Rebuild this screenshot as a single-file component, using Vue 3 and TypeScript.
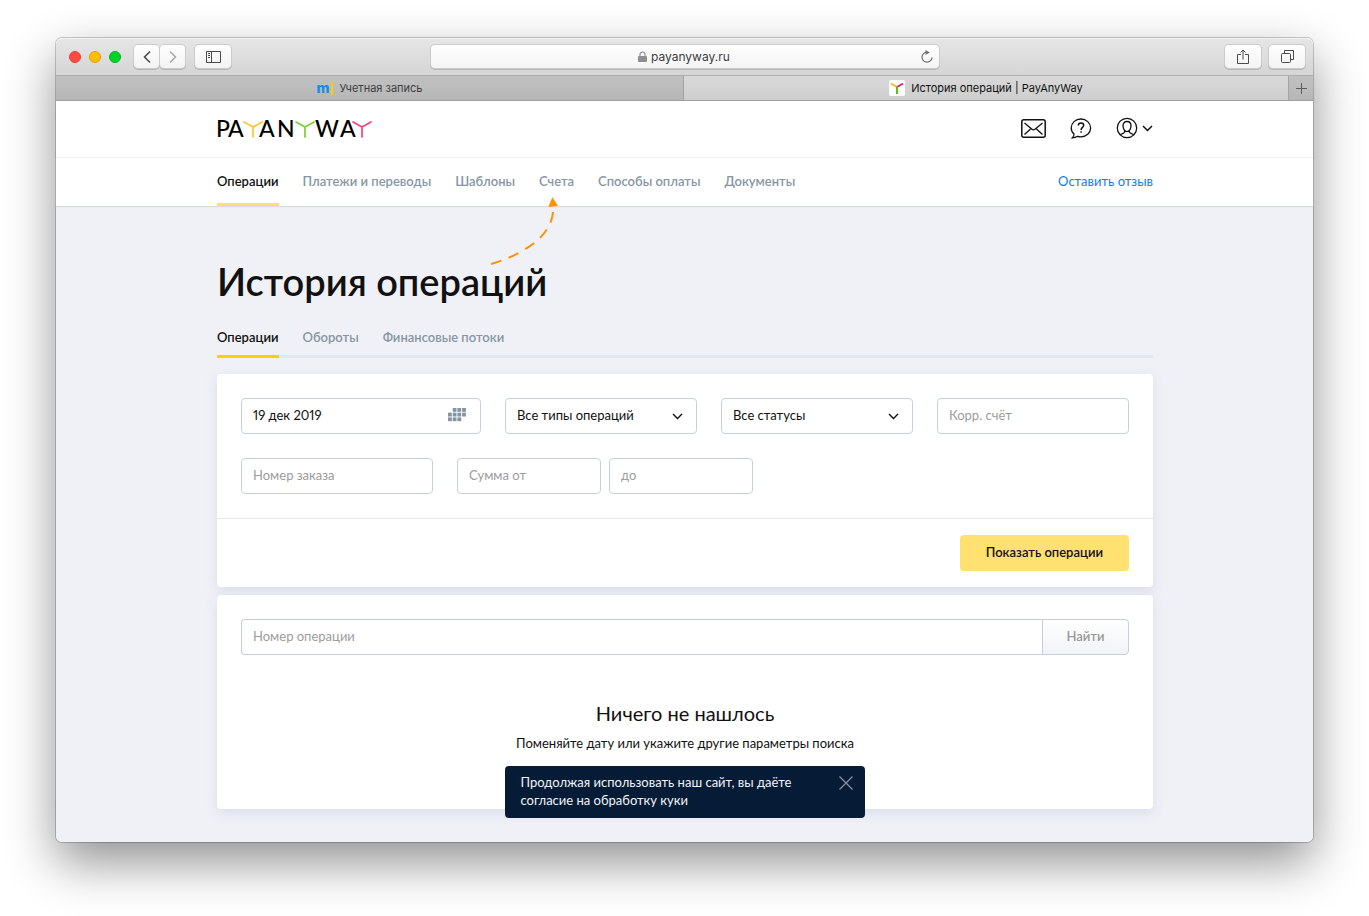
<script setup lang="ts">
import { ref } from 'vue'

interface LinkItem {
  label: string
  active?: boolean
}

const sections: LinkItem[] = [
  { label: 'Операции', active: true },
  { label: 'Платежи и переводы' },
  { label: 'Шаблоны' },
  { label: 'Счета' },
  { label: 'Способы оплаты' },
  { label: 'Документы' },
]

const tabs: LinkItem[] = [
  { label: 'Операции', active: true },
  { label: 'Обороты' },
  { label: 'Финансовые потоки' },
]

const calendarCells: [number, number][] = [
  [4.7, 0], [9.4, 0], [14.1, 0],
  [0, 4.7], [4.7, 4.7], [9.4, 4.7], [14.1, 4.7],
  [0, 9.4], [4.7, 9.4], [9.4, 9.4],
]

const address = ref('payanyway.ru')
const date = ref('19 дек 2019')
const operationType = ref('all')
const status = ref('all')
const account = ref('')
const order = ref('')
const amountFrom = ref('')
const amountTo = ref('')
const operationId = ref('')
const cookieNotice = ref(true)
</script>

<template>
  <div class="desktop">
    <div class="window">
      <div class="toolbar">
        <div class="toolbar-left">
          <div class="lights">
            <span class="light red"></span>
            <span class="light amber"></span>
            <span class="light green"></span>
          </div>
          <div class="history">
            <button class="chrome-button" type="button" aria-label="Назад">
              <svg width="10" height="14" viewBox="0 0 10 14"><path d="M8 1.500L2.500 7L8 12.500" fill="none" stroke="#4a4a4a" stroke-width="1.600" /></svg>
            </button>
            <button class="chrome-button" type="button" aria-label="Вперёд">
              <svg width="10" height="14" viewBox="0 0 10 14"><path d="M2 1.500L7.500 7L2 12.500" fill="none" stroke="#a9a9a9" stroke-width="1.600" /></svg>
            </button>
          </div>
          <button class="chrome-button wide" type="button" aria-label="Боковая панель">
            <svg width="15" height="12" viewBox="0 0 15 12" fill="none" stroke="#4a4a4a"><path d="M.5.5h14v11H.5zM5.500.5v11M2 2.500h2M2 4.500h2M2 6.500h2" /></svg>
          </button>
        </div>
        <label class="address">
          <svg width="9" height="12" viewBox="0 0 9 12"><path d="M2 6V3.500a2.500 2.500 0 0 1 5 0V6" fill="none" stroke="#8e8e8e" stroke-width="1.200" /><rect x="0" y="5" width="9" height="6" rx="1" fill="#8e8e8e" /></svg>
          <input v-model="address" class="address-input" type="text" aria-label="Адрес" />
          <button class="reload" type="button" aria-label="Обновить">
            <svg width="14" height="14" viewBox="0 0 14 14"><path d="M7 2.200A5 5 0 1 0 12 7.500" fill="none" stroke="#6f6f6f" stroke-width="1.200" /><path d="M5.500 0L9.800 2.400L5.500 5z" fill="#6f6f6f" /></svg>
          </button>
        </label>
        <div class="toolbar-right">
          <button class="chrome-button wide" type="button" aria-label="Поделиться">
            <svg width="12" height="16" viewBox="0 0 12 16" fill="none" stroke="#4a4a4a"><path d="M4 5.500H.5v9h11v-9H8M6 10.500V1M3.500 3.500L6 1l2.500 2.500" /></svg>
          </button>
          <button class="chrome-button wide" type="button" aria-label="Вкладки">
            <svg width="13" height="13" viewBox="0 0 13 13" fill="none" stroke="#4a4a4a"><rect x=".5" y="3.500" width="9" height="9" rx="1" /><path d="M3.500 3V.5h9v9H10" /></svg>
          </button>
        </div>
      </div>

      <div class="browser-tabs">
        <a class="browser-tab account-tab" href="#">
          <span class="m-mark">m</span><span class="m-bar"></span>Учетная запись
        </a>
        <a class="browser-tab current" href="#">
          <svg class="favicon" width="16" height="16" viewBox="0 0 16 16" fill="none" stroke-width="2"><rect width="16" height="16" rx="2" fill="#fff" /><path d="M2 3.500L8 7" stroke="#fdb813" /><path d="M8 7L14 3.500" stroke="#ee1c78" /><path d="M8 6.500V14" stroke="#58c30c" /></svg>
          История операций | PayAnyWay
        </a>
        <button class="new-tab" type="button" aria-label="Новая вкладка">
          <svg width="11" height="11" viewBox="0 0 11 11"><path d="M5.500 0v11M0 5.500h11" stroke="#5c5c5c" /></svg>
        </button>
      </div>

      <div class="page">
        <header class="header">
          <a class="logo" href="#" aria-label="PayAnyWay">
            <svg width="160" height="36" viewBox="-4 -8 160 36">
              <g class="logo-text">
                <text x="-1" y="18">P</text>
                <text x="11" y="18">A</text>
                <text x="42" y="18">A</text>
                <text x="60" y="18">N</text>
                <text x="98" y="18">W</text>
                <text x="123" y="18">A</text>
              </g>
              <g fill="none" stroke-width="1.700" stroke-linecap="round">
                <path d="M27 3l9 5 9-5M36 8v10" stroke="#ffc62b" />
                <path d="M79 3l9 5 9-5M88 8v10" stroke="#79cf30" />
                <path d="M136 3l9 5 9-5M145 8v10" stroke="#f4437f" />
              </g>
            </svg>
          </a>
          <div class="header-actions">
            <button class="icon-button" type="button" aria-label="Сообщения">
              <svg width="25" height="19" viewBox="0 0 25 19" fill="none" stroke="#111" stroke-width="1.500"><rect x=".8" y=".8" width="23.400" height="17.400" rx="2" /><path d="M3.500 4l7.500 6.200q1.500 1.200 3 0L21.500 4M3.500 15.500l6-5.500M21.500 15.500l-6-5.500" stroke-width="1.300" /></svg>
            </button>
            <button class="icon-button" type="button" aria-label="Помощь">
              <svg width="22" height="21" viewBox="0 0 22 21" fill="none" stroke="#111" stroke-width="1.300"><path d="M4 16C2.200 14.500 1.200 12.400 1.200 10c0-5 4.300-9 9.700-9s9.700 4 9.700 9-4.300 8.800-9.700 8.800c-1.300 0-2.400-.2-3.500-.5-1.300.9-3 1.500-5 1.500C3.600 18.800 4 17.500 4 16z" /><path d="M8.300 7.500c0-1.600 1.100-2.600 2.700-2.600s2.700.9 2.700 2.400c0 2.100-2.600 2-2.600 4.600M11.100 13.200v1.500" stroke-width="1.500" /></svg>
            </button>
            <button class="icon-button profile" type="button" aria-label="Профиль">
              <svg width="22" height="22" viewBox="0 0 22 22" fill="none" stroke="#111" stroke-width="1.300"><circle cx="11" cy="11" r="9.700" /><path d="M11 4.500c-2.600 0-4 1.800-4 4.300 0 3 1.700 5.800 4 5.800s4-2.800 4-5.800c0-2.500-1.400-4.300-4-4.300zM8.700 13.800v1.300c0 1.300-3.400 1.400-4.600 2.800M13.300 13.800v1.300c0 1.300 3.400 1.400 4.600 2.800" /></svg>
              <svg width="11" height="7" viewBox="0 0 11 7"><path d="M1 1l4.500 4.500L10 1" fill="none" stroke="#111" stroke-width="1.500" /></svg>
            </button>
          </div>
        </header>

        <nav class="nav">
          <a v-for="item in sections" :key="item.label" class="nav-link" :class="{ active: item.active }" href="#">{{ item.label }}</a>
          <a class="feedback" href="#">Оставить отзыв</a>
        </nav>

        <svg class="pointer" width="72" height="70" viewBox="0 0 72 70">
          <path d="M3 67C30 59 63 42 65 15" pathLength="79" fill="none" stroke="#ff9100" stroke-width="2" stroke-dasharray="10 7.250" />
          <path d="M64.300.3L60.300 10L70 8.800z" fill="#ff9100" />
        </svg>

        <main class="content">
          <h1 class="title">История операций</h1>
          <nav class="tabs">
            <a v-for="item in tabs" :key="item.label" class="tab" :class="{ active: item.active }" href="#">{{ item.label }}</a>
          </nav>

          <form class="card" @submit.prevent>
            <div class="filters">
              <div class="field">
                <input v-model="date" class="control" type="text" aria-label="Дата" />
                <svg class="field-icon calendar" width="19" height="14" viewBox="0 0 19 14" fill="#8494a2">
                  <rect v-for="[x, y] in calendarCells" :key="`${x}-${y}`" :x="x" :y="y" width="3.800" height="3.800" />
                </svg>
              </div>
              <div class="field">
                <select v-model="operationType" class="control" aria-label="Тип операции">
                  <option value="all">Все типы операций</option>
                </select>
                <svg class="field-icon" width="11" height="7" viewBox="0 0 11 7"><path d="M1 1l4.500 4.500L10 1" fill="none" stroke="#111" stroke-width="1.400" /></svg>
              </div>
              <div class="field">
                <select v-model="status" class="control" aria-label="Статус">
                  <option value="all">Все статусы</option>
                </select>
                <svg class="field-icon" width="11" height="7" viewBox="0 0 11 7"><path d="M1 1l4.500 4.500L10 1" fill="none" stroke="#111" stroke-width="1.400" /></svg>
              </div>
              <input v-model="account" class="control" type="text" placeholder="Корр. счёт" aria-label="Корр. счёт" />
            </div>
            <div class="filters-extra">
              <input v-model="order" class="control order" type="text" placeholder="Номер заказа" aria-label="Номер заказа" />
              <div class="range">
                <input v-model="amountFrom" class="control" type="text" placeholder="Сумма от" aria-label="Сумма от" />
                <input v-model="amountTo" class="control" type="text" placeholder="до" aria-label="Сумма до" />
              </div>
            </div>
            <div class="card-footer">
              <button class="submit" type="submit">Показать операции</button>
            </div>
          </form>

          <section class="card results">
            <form class="search" @submit.prevent>
              <input v-model="operationId" class="control search-input" type="text" placeholder="Номер операции" aria-label="Номер операции" />
              <button class="search-button" type="submit">Найти</button>
            </form>
            <h2 class="empty-title">Ничего не нашлось</h2>
            <p class="empty-text">Поменяйте дату или укажите другие параметры поиска</p>
          </section>
        </main>
      </div>

      <div v-if="cookieNotice" class="cookie">
        <p class="cookie-text">Продолжая использовать наш сайт, вы даёте согласие на обработку куки</p>
        <button class="cookie-close" type="button" aria-label="Закрыть" @click="cookieNotice = false">
          <svg width="14" height="14" viewBox="0 0 14 14"><path d="M.5.5l13 13M13.500.5l-13 13" stroke="#8290a0" stroke-width="1.300" /></svg>
        </button>
      </div>
    </div>
  </div>
</template>

<style>
body {
  margin: 0;
  background: #fff;
}
</style>

<style scoped>
* {
  box-sizing: border-box;
}

.desktop {
  display: flex;
  min-height: 100vh;
  padding: 38px 56px 74px;
  overflow: hidden;
  font-family: Lato, "Open Sans", "Liberation Sans", sans-serif;
  font-size: 13px;
  font-variant-numeric: proportional-nums;
  line-height: 18px;
  color: #111;
}

button,
input,
select {
  margin: 0;
  font: inherit;
  color: inherit;
}

button {
  padding: 0;
  border: 0;
  background: none;
  cursor: pointer;
}

a {
  color: inherit;
  text-decoration: none;
}

svg {
  display: block;
  flex: none;
}

.window {
  position: relative;
  display: flex;
  flex: 1;
  flex-direction: column;
  border-radius: 6px;
  box-shadow: 0 0 0 1px rgba(0, 0, 0, 0.2), 0 20px 50px rgba(0, 0, 0, 0.44);
}

.toolbar {
  display: grid;
  grid-template-columns: 1fr 508px 1fr;
  align-items: center;
  height: 38px;
  padding: 0 8px;
  border-bottom: 1px solid #adadad;
  border-radius: 6px 6px 0 0;
  background: linear-gradient(#e6e6e6, #d5d5d5);
  box-shadow: inset 0 1px #f4f4f4;
  font-family: Inter, "Liberation Sans", sans-serif;
}

.toolbar-left,
.toolbar-right,
.lights,
.history {
  display: flex;
  align-items: center;
}

.toolbar-left {
  padding-left: 5px;
}

.toolbar-right {
  justify-content: flex-end;
  gap: 8px;
}

.lights {
  gap: 8px;
}

.light {
  width: 12px;
  height: 12px;
  border: 1px solid;
  border-radius: 50%;
}

.red {
  border-color: #e33e38;
  background: #ff4a42;
}

.amber {
  border-color: #e0a100;
  background: #ffbd00;
}

.green {
  border-color: #00b51e;
  background: #00d226;
}

.history {
  gap: 1px;
  margin: 0 10px 0 13px;
}

.chrome-button {
  display: grid;
  place-items: center;
  width: 25px;
  height: 23px;
  border-radius: 4px;
  background: linear-gradient(#fefefe, #f3f3f3);
  box-shadow: 0 0 0 1px #cbcbcb, 0 1px 0 1px #b5b5b5;
}

.chrome-button.wide {
  width: 36px;
}

.address {
  display: flex;
  position: relative;
  align-items: center;
  justify-content: center;
  gap: 4px;
  height: 23px;
  border-radius: 4px;
  background: linear-gradient(#fefefe, #f4f4f4);
  box-shadow: 0 0 0 1px #cbcbcb, 0 1px 0 1px #b5b5b5;
  color: #3c3c3c;
}

.address-input {
  width: 80px;
  padding: 1px 0 0;
  border: 0;
  outline: 0;
  background: none;
  font-size: 12px;
}

.reload {
  position: absolute;
  right: 5px;
}

.browser-tabs {
  display: grid;
  grid-template-columns: 628px 1fr 24px;
  height: 25px;
  border-bottom: 1px solid #a0a0a0;
  background: linear-gradient(#c1c1c1, #b6b6b6);
  font-family: Inter, "Liberation Sans", sans-serif;
  font-size: 11px;
  color: #3d3d3d;
}

.browser-tab {
  display: flex;
  align-items: center;
  justify-content: center;
  border-right: 1px solid #a4a4a4;
}

.browser-tab.current {
  background: linear-gradient(#d9d9d9, #cecece);
  color: #111;
}

.m-mark {
  font-size: 14px;
  font-weight: 800;
  line-height: 18px;
  color: #168de2;
}

.m-bar {
  width: 2px;
  height: 13px;
  margin: 0 6px 0 2px;
  background: #ffcc00;
}

.favicon {
  margin-right: 6px;
}

.new-tab {
  display: grid;
  place-items: center;
}

.page {
  flex: 1;
  border-radius: 0 0 6px 6px;
  background: #f0f1f7;
}

.header,
.nav {
  display: flex;
  padding: 0 160px 0 161px;
  background: #fff;
}

.header {
  align-items: center;
  justify-content: space-between;
  height: 57px;
  border-bottom: 1px solid #f0f1f7;
}

.logo {
  margin-left: -4px;
}

.logo-text {
  font-size: 23px;
  font-weight: 500;
  fill: #000;
}

.header-actions {
  display: flex;
  align-items: center;
  gap: 24px;
  padding-bottom: 2px;
}

.profile {
  display: flex;
  align-items: center;
  gap: 4px;
}

.nav {
  gap: 24px;
  height: 48px;
  box-shadow: 0 1px 1px #d9dbe3;
  line-height: 46px;
}

.nav-link,
.tab {
  font-weight: 600;
  color: #8796a3;
}

.nav-link.active,
.tab.active {
  color: #111;
}

.nav-link.active {
  border-bottom: 3px solid #ffe06c;
}

.feedback {
  margin-left: auto;
  color: #0e80dd;
}

.pointer {
  position: absolute;
  top: 159px;
  left: 432px;
}

.content {
  padding: 52px 160px 33px 161px;
}

.title {
  margin: 0;
  font-size: 38px;
  font-weight: 600;
  line-height: 46px;
}

.tabs {
  display: flex;
  gap: 24px;
  height: 38px;
  margin: 16px 0;
  box-shadow: inset 0 -3px #e1e7ec;
  line-height: 34px;
}

.tab.active {
  border-bottom: 3px solid #ffd000;
}

.card {
  padding: 24px;
  border-radius: 4px;
  background: #fff;
  box-shadow: 0 4px 12px rgba(190, 198, 220, 0.45);
}

.filters {
  display: grid;
  grid-template-columns: 5fr 4fr 4fr 4fr;
  gap: 24px;
}

.field {
  position: relative;
}

.control {
  display: block;
  width: 100%;
  height: 36px;
  padding: 0 11px 2px;
  border: 1px solid #c4d0dd;
  border-radius: 4px;
  outline: 0;
  appearance: none;
  background: #fff;
}

.control::placeholder {
  color: #9c9c9c;
  opacity: 1;
}

.field-icon {
  position: absolute;
  top: 15px;
  right: 14px;
  pointer-events: none;
}

.field-icon.calendar {
  top: 10px;
}

.filters-extra {
  display: flex;
  gap: 24px;
  margin-top: 24px;
}

.control.order {
  width: 192px;
}

.range {
  display: grid;
  grid-template-columns: 144px 144px;
  gap: 8px;
}

.card-footer {
  display: flex;
  justify-content: flex-end;
  margin: 24px -24px -8px;
  padding: 16px 24px 0;
  border-top: 1px solid #e6e8ea;
}

.submit {
  height: 36px;
  padding: 0 26px 2px;
  border-radius: 4px;
  background: #ffe171;
  font-weight: 600;
}

.results {
  min-height: 214px;
  margin-top: 8px;
  text-align: center;
}

.search {
  display: flex;
}

.search-input {
  flex: 1;
  border-right: 0;
  border-radius: 4px 0 0 4px;
}

.search-button {
  width: 87px;
  padding-bottom: 2px;
  border: 1px solid #c4d0dd;
  border-radius: 0 4px 4px 0;
  background: linear-gradient(#fff, #f1f3f7);
  font-weight: 600;
  color: #999;
}

.empty-title {
  margin: 44px 0 0;
  font-size: 20px;
  font-weight: 400;
  line-height: 28px;
}

.empty-text {
  margin: 7px 0 0;
}

.cookie {
  display: flex;
  position: absolute;
  right: 0;
  bottom: 24px;
  left: 0;
  align-items: flex-start;
  justify-content: space-between;
  width: 360px;
  margin: 0 auto;
  padding: 7px 12px 9px 16px;
  border-radius: 4px;
  background: #061c36;
  color: #f2f4f6;
}

.cookie-text {
  width: 288px;
  margin: 0;
}

.cookie-close {
  margin-top: 3px;
}
</style>
